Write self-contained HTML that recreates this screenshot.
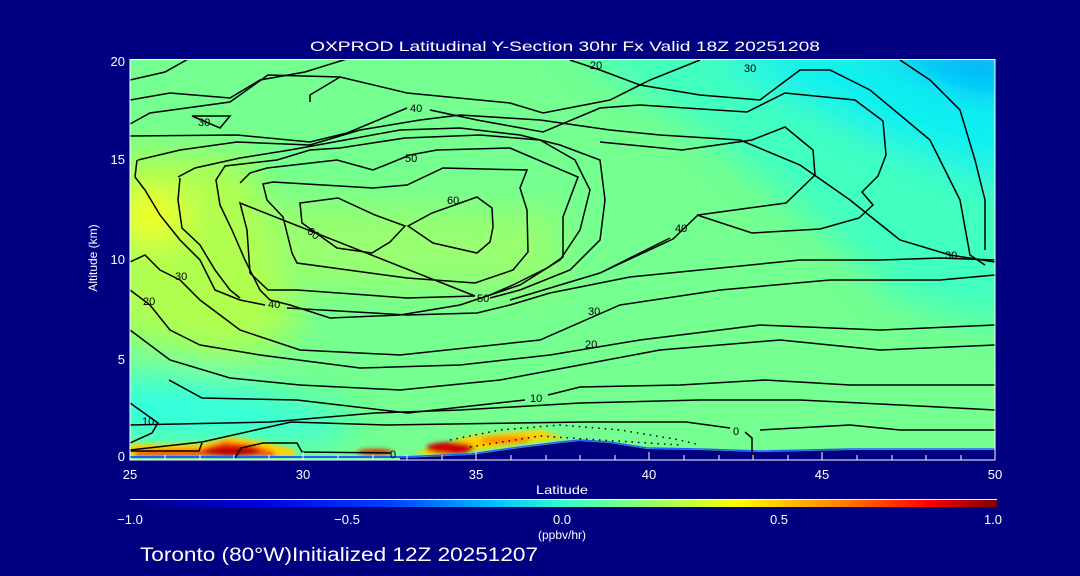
<!DOCTYPE html>
<html><head><style>
body{margin:0;width:1080px;height:576px;background:#000080;overflow:hidden}
svg{display:block}
text{font-family:"Liberation Sans",sans-serif;fill:#fff}
.k{fill:#000}
</style></head><body>
<svg width="1080" height="576" viewBox="0 0 1080 576">
<defs>
<clipPath id="c"><rect x="130" y="59" width="865" height="401"/></clipPath>
<filter id="b" x="-50%" y="-50%" width="200%" height="200%"><feGaussianBlur stdDeviation="18"/></filter>
<filter id="b2" x="-50%" y="-50%" width="200%" height="200%"><feGaussianBlur stdDeviation="2"/></filter>
<linearGradient id="cb" x1="0" x2="1">
<stop offset="0" stop-color="#000080"/><stop offset="0.15" stop-color="#0000e0"/><stop offset="0.3" stop-color="#0040ff"/><stop offset="0.42" stop-color="#00c0ff"/><stop offset="0.5" stop-color="#30ffd0"/><stop offset="0.58" stop-color="#80ff80"/><stop offset="0.7" stop-color="#ffff00"/><stop offset="0.82" stop-color="#ff8000"/><stop offset="0.92" stop-color="#ff0000"/><stop offset="1" stop-color="#800000"/>
</linearGradient>
</defs>
<g clip-path="url(#c)">
<rect x="130" y="59" width="865" height="401" fill="#74ff90"/>
<g filter="url(#b)">
<polygon points="560,40 1020,40 1020,330 900,300 800,210 700,130" fill="#40ffc0"/>
<polygon points="700,40 1020,40 1020,190 880,140 780,90" fill="#10f0f0"/>
<polygon points="860,40 1020,40 1020,100 950,85" fill="#00b0ff"/>
<polygon points="110,150 250,160 300,330 230,360 110,330" fill="#b0ff50"/>
<ellipse cx="150" cy="215" rx="35" ry="22" fill="#ffff00"/>
<polygon points="260,200 560,210 560,290 300,290" fill="#98ff70"/>
<polygon points="110,375 240,385 360,420 330,440 110,440" fill="#30ffe0"/>
</g>
<g filter="url(#b2)">
<polygon points="130,444 200,444 230,437 265,442 295,450 295,456 130,456" fill="#ffd000"/>
<polygon points="135,450 200,449 225,441 250,444 275,452 275,456 135,456" fill="#ff5000"/>
<ellipse cx="232" cy="451" rx="28" ry="5" fill="#c00000"/>
<ellipse cx="375" cy="452" rx="18" ry="3" fill="#e02000"/>
<polygon points="415,453 470,436 540,430 565,438 500,447 440,456" fill="#ffd000"/>
<ellipse cx="450" cy="448" rx="24" ry="6" fill="#d00000"/>
<ellipse cx="505" cy="440" rx="25" ry="4" fill="#ff9000"/>
</g>
<polygon points="400,458 470,455 520,448 560,443 580,441 610,443 647,449 700,450 760,452 850,450 995,450 995,460 400,460" fill="#000080"/>
<polyline points="400,457 470,454 520,447 560,442 580,440 610,442 647,448 700,449 760,451 850,449 995,449" fill="none" stroke="#2060ff" stroke-width="1.5"/>
<rect x="130" y="456" width="275" height="2" fill="#2060ff"/>
<g fill="none" stroke="#000" stroke-width="1.5">
<path d="M130,80 L165,72 190,58"/>
<path d="M130,100 L170,93 230,98 260,80 305,72 350,58"/>
<path d="M130,124 L150,113 230,102 268,75 340,77 407,93 510,103 543,113 610,100 650,80 700,60"/>
<path d="M192,116 L230,116 220,128 Z"/>
<path d="M310,102 L310,95 340,77"/>
<path d="M130,136 L237,135 310,142 347,133 407,108 M430,110 L477,120 543,132 600,108 640,105 747,112 785,93 855,100 883,121 886,155 878,176 862,192 873,205 859,218 820,229 752,233 697,215 M670,238 L600,273 560,285 510,300"/>
<path d="M570,60 L600,70 640,85 700,95 760,100 800,70 830,70 870,90 930,140 960,200 970,255 985,265"/>
<path d="M900,60 L930,80 960,110 975,160 985,200 985,250"/>
<path d="M600,142 L682,150 752,140 785,127 813,150 815,175 786,203 698,215 673,239 600,273"/>
<path d="M138,160 L180,150 237,142 310,145 360,130 420,120 460,115 540,120 610,130 660,135 740,140 800,165 850,200 900,240 950,255 995,262"/>
<path d="M135,177 L137,160"/>
<path d="M135,177 L145,190 160,215 180,240 200,260 215,290 240,300 265,305 M287,308 L407,315 477,313 510,305 550,293 630,277 700,270 800,260 880,260 940,258 995,260"/>
<path d="M178,177 L195,168 240,158 290,150 345,140 400,130 460,128 520,135 560,145 600,160 605,200 600,240 570,270 520,290 490,298"/>
<path d="M180,178 L178,200 182,228 200,245 215,270 230,290 240,298"/>
<path d="M216,180 L225,166 277,160 310,150 340,148 405,138 480,135 540,140 575,160 590,190 580,230 560,260 520,285 460,305 400,315 330,318 290,305 270,300 260,290 245,260 232,230 220,205 Z"/>
<path d="M240,183 L250,173 267,168 337,160 373,170 410,155 437,150 510,148 578,177 563,217 563,257 547,268 513,285 490,295 M475,296 L407,298 297,290 268,290 250,273 247,230 240,203 Z"/>
<path d="M263,184 L273,182 373,188 407,185 443,168 527,170 520,188 527,210 528,252 513,270 475,283 407,278 297,263 292,253 283,217 267,200 Z"/>
<path d="M300,203 L338,198 375,215 405,226 390,242 372,253 337,248 302,223 Z M408,226 L432,213 477,197 492,208 493,227 490,242 477,253 433,243 Z"/>
<path d="M130,262 L145,255 160,270 180,280 200,300 240,330 300,350 400,355 540,340 620,305 720,290 830,280 940,280 995,275"/>
<path d="M130,290 L150,305 170,330 200,345 260,355 360,368 460,365 550,355 640,340 760,325 880,330 995,325"/>
<path d="M130,330 L170,360 230,378 300,385 400,390 500,380 580,365 660,350 780,340 880,350 995,345"/>
<path d="M169,380 L202,398 297,400 408,413 525,400 M548,395 L580,387 680,385 765,380 850,385 995,385"/>
<path d="M130,403 L158,423 152,433 130,443"/>
<path d="M130,425 L270,422 375,413 460,410 580,403 700,400 800,400 900,405 995,410"/>
<path d="M130,450 L202,442 291,422 386,425 586,422 686,422 730,428"/>
<path d="M745,432 L752,438 752,460"/>
<path d="M130,451 L199,451 202,443"/>
<path d="M235,458 L241,448 263,443 297,443 302,452 391,453"/>
<path d="M760,430 L850,425 900,430 995,430"/>
</g>
<g fill="none" stroke="#000" stroke-width="1.5" stroke-dasharray="1.5,5">
<path d="M450,440 L500,430 560,425 620,430 680,440 700,445"/>
<path d="M470,447 L540,436 600,440 680,445"/>
</g>
<g font-size="11">
<text class="k" x="198" y="126">30</text>
<text class="k" x="410" y="112">40</text>
<text class="k" x="405" y="162">50</text>
<text class="k" x="447" y="204">60</text>
<text class="k" x="308" y="238" transform="rotate(40 315 233)">60</text>
<text class="k" x="477" y="302">50</text>
<text class="k" x="268" y="308">40</text>
<text class="k" x="175" y="280">30</text>
<text class="k" x="143" y="305">20</text>
<text class="k" x="142" y="425">10</text>
<text class="k" x="588" y="315">30</text>
<text class="k" x="585" y="348">20</text>
<text class="k" x="530" y="402">10</text>
<text class="k" x="675" y="232">40</text>
<text class="k" x="744" y="72">30</text>
<text class="k" x="590" y="69">20</text>
<text class="k" x="945" y="259">30</text>
<text class="k" x="390" y="458">0</text>
<text class="k" x="733" y="435">0</text>
</g>
</g>
<rect x="130" y="59.5" width="865" height="400.5" fill="none" stroke="#fff"/>
<g stroke="#fff">
<path d="M165,460v-5M200,460v-5M234,460v-5M269,460v-5M338,460v-5M373,460v-5M407,460v-5M442,460v-5M511,460v-5M546,460v-5M580,460v-5M615,460v-5M684,460v-5M719,460v-5M753,460v-5M788,460v-5M857,460v-5M892,460v-5M926,460v-5M961,460v-5"/>
<path d="M303,460v-8M476,460v-8M649,460v-8M822,460v-8"/>
</g>
<text x="310" y="51" font-size="14" textLength="510" lengthAdjust="spacingAndGlyphs">OXPROD Latitudinal Y-Section 30hr  Fx Valid 18Z 20251208</text>
<g font-size="13" text-anchor="end">
<text x="125" y="66">20</text><text x="125" y="164">15</text><text x="125" y="264">10</text><text x="125" y="364">5</text><text x="125" y="461">0</text>
</g>
<g font-size="13" text-anchor="middle">
<text x="130" y="479">25</text><text x="303" y="479">30</text><text x="476" y="479">35</text><text x="649" y="479">40</text><text x="822" y="479">45</text><text x="995" y="479">50</text>
</g>
<text x="536" y="494" font-size="12" textLength="52" lengthAdjust="spacingAndGlyphs">Latitude</text>
<text transform="translate(97,258) rotate(-90)" font-size="12" text-anchor="middle">Altitude (km)</text>
<line x1="130" y1="499.5" x2="997" y2="499.5" stroke="#fff"/>
<rect x="130" y="500" width="867" height="7" fill="url(#cb)"/>
<g font-size="13" text-anchor="middle">
<text x="130" y="524">−1.0</text><text x="347" y="524">−0.5</text><text x="562" y="524">0.0</text><text x="779" y="524">0.5</text><text x="993" y="524">1.0</text>
</g>
<text x="562" y="539" font-size="12" text-anchor="middle">(ppbv/hr)</text>
<text x="140" y="561" font-size="19" textLength="398" lengthAdjust="spacingAndGlyphs">Toronto (80°W)Initialized 12Z 20251207</text>
</svg>
</body></html>
